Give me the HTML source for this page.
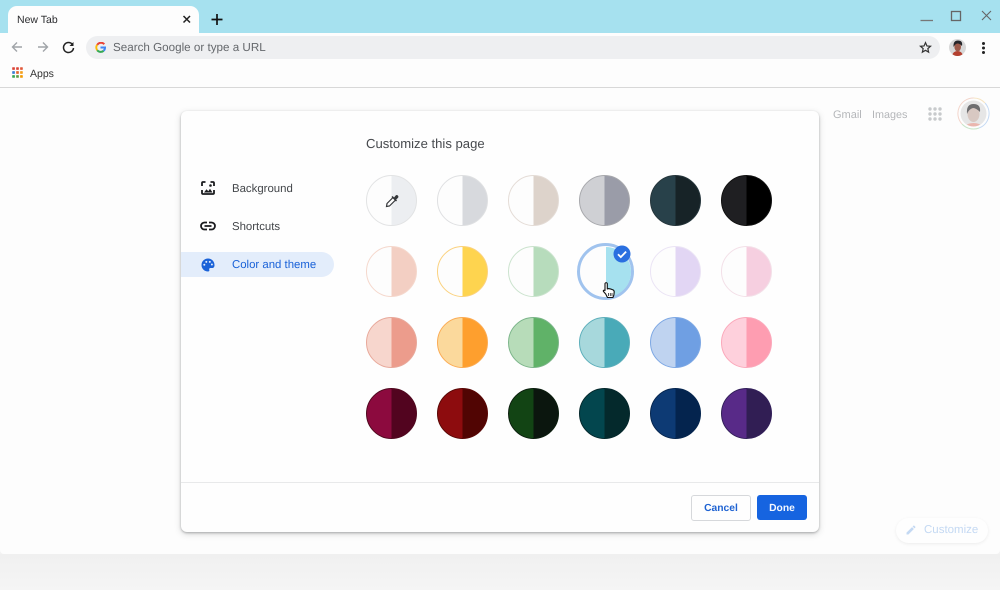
<!DOCTYPE html>
<html><head><meta charset="utf-8"><style>
html,body{margin:0;padding:0}
body{width:1000px;height:590px;overflow:hidden;position:relative;background:#f3f3f3;font-family:"Liberation Sans",sans-serif;text-rendering:geometricPrecision}
.a{position:absolute}
.t{position:absolute;white-space:nowrap;line-height:16px}
.c{position:absolute;width:51px;height:51px;border-radius:50%;box-sizing:border-box;border:1.5px solid}
</style></head><body>
<div class="a" style="left:0;top:0;width:1000px;height:34px;background:#a6e1ef"></div>
<div class="a" style="left:0;top:33px;width:1000px;height:55px;background:#fdfdfd"></div>
<div class="a" style="left:8px;top:6px;width:191px;height:28px;background:#fdfdfd;border-radius:9px 9px 0 0"></div>
<div class="t" style="left:17px;top:12px;font-size:10.5px;color:#2b2c2f">New Tab</div>
<svg class="a" style="left:0;top:0" width="1000" height="90" fill="none">
<path d="M183.500 16l6.500 6.500M190 16l-6.500 6.500" stroke="#222" stroke-width="1.500"/>
<path d="M217 14v11M211.500 19.500h11" stroke="#111" stroke-width="1.700"/>
<path d="M920.500 20.500h12.500" stroke="#777" stroke-width="1.300"/>
<rect x="951.500" y="11.500" width="9" height="9" stroke="#666" stroke-width="1.300"/>
<path d="M982 11l9 9M991 11l-9 9" stroke="#666" stroke-width="1.100"/>
<path d="M22 47H13M17 42.500L12.500 47L17 51.500" stroke="#a0a4a8" stroke-width="1.400"/>
<path d="M38 47H47M43 42.500L47.500 47L43 51.500" stroke="#a0a4a8" stroke-width="1.400"/>
<path d="M72.500 44.500A5 5 0 1 0 73.500 48" stroke="#222" stroke-width="1.500"/>
<path d="M73.500 42v4h-4z" fill="#222"/>
</svg>
<div class="a" style="left:86px;top:36px;width:854px;height:23px;border-radius:12px;background:#eeeff1"></div>
<svg class="a" style="left:95px;top:42px" width="11" height="11" viewBox="0 0 11 11" fill="none" stroke-width="2">
<path d="M9.300 2.200A4.500 4.500 0 0 0 2.200 2.800" stroke="#ea4335"/>
<path d="M2.200 2.800A4.500 4.500 0 0 0 2.200 8.200" stroke="#fbbc05"/>
<path d="M2.200 8.200A4.500 4.500 0 0 0 8.600 8.800" stroke="#34a853"/>
<path d="M8.600 8.800A4.500 4.500 0 0 0 10 5.500H5.500" stroke="#4285f4"/>
</svg>
<div class="t" style="left:113px;top:40px;font-size:11.650px;color:#65686c">Search Google or type a URL</div>
<svg class="a" style="left:919px;top:41px" width="13" height="13" viewBox="0 0 24 24" fill="none" stroke="#333" stroke-width="2.200"><path d="M12 3l2.700 6.100 6.600.6-5 4.400 1.500 6.500-5.800-3.400-5.800 3.400 1.500-6.500-5-4.400 6.600-.6z"/></svg>
<svg class="a" style="left:949px;top:39px;filter:blur(.3px)" width="17" height="17" viewBox="0 0 17 17"><clipPath id="sp"><circle cx="8.500" cy="8.500" r="8.500"/></clipPath><g clip-path="url(#sp)"><rect width="17" height="17" fill="#d8d8d8"/><path d="M3 17q1-5 5.500-5t5.500 5z" fill="#b4402f"/><ellipse cx="8.700" cy="8" rx="3.300" ry="4.500" fill="#9c5a4a"/><path d="M4.500 8q-.500-6.500 4.500-6.500T13 7q-2.500-2.500-4.500-2.500T4.500 8z" fill="#26262a"/></g></svg>
<div class="a" style="left:981.500px;top:42px;width:3px;height:3px;border-radius:50%;background:#222;box-shadow:0 4.500px 0 #222,0 9px 0 #222"></div>
<svg class="a" style="left:12px;top:67px" width="11" height="11" viewBox="0 0 11 11">
<rect x=".2" y=".2" width="2.700" height="2.700" rx=".6" fill="#db4437"/><rect x="4.150" y=".2" width="2.700" height="2.700" rx=".6" fill="#db4437"/><rect x="8.100" y=".2" width="2.700" height="2.700" rx=".6" fill="#e2593a"/>
<rect x=".2" y="4.150" width="2.700" height="2.700" rx=".6" fill="#3d7fd6"/><rect x="4.150" y="4.150" width="2.700" height="2.700" rx=".6" fill="#e0662f"/><rect x="8.100" y="4.150" width="2.700" height="2.700" rx=".6" fill="#f4a020"/>
<rect x=".2" y="8.100" width="2.700" height="2.700" rx=".6" fill="#34a853"/><rect x="4.150" y="8.100" width="2.700" height="2.700" rx=".6" fill="#5f9d45"/><rect x="8.100" y="8.100" width="2.700" height="2.700" rx=".6" fill="#f29900"/>
</svg>
<div class="t" style="left:30px;top:66px;font-size:10.500px;color:#333">Apps</div>
<div class="a" style="left:0;top:87px;width:1000px;height:1px;background:#d8d8d8"></div>

<div class="a" style="left:0;top:88px;width:1000px;height:466px;background:#fdfdfd;border-radius:0 0 4px 4px"></div>
<div class="a" style="left:0;top:554px;width:1000px;height:36px;background:linear-gradient(#f0f0f0,#f5f5f5)"></div>
<div class="t" style="left:833px;top:107px;font-size:11px;color:#b4b6b9">Gmail</div>
<div class="t" style="left:872px;top:107px;font-size:10.800px;color:#b4b6b9">Images</div>
<svg class="a" style="left:928px;top:107px" width="14" height="14" fill="#c8cacc"><circle cx="2" cy="2" r="1.700"/><circle cx="7" cy="2" r="1.700"/><circle cx="12" cy="2" r="1.700"/><circle cx="2" cy="7" r="1.700"/><circle cx="7" cy="7" r="1.700"/><circle cx="12" cy="7" r="1.700"/><circle cx="2" cy="12" r="1.700"/><circle cx="7" cy="12" r="1.700"/><circle cx="12" cy="12" r="1.700"/></svg>
<svg class="a" style="left:957px;top:97px;filter:blur(.3px)" width="33" height="33" viewBox="0 0 33 33" fill="none">
<path d="M16.500 1A15.500 15.500 0 0 0 5 27" stroke="#f3d5cb" stroke-width="1"/><path d="M5 27A15.500 15.500 0 0 0 22 31" stroke="#c8e4c8" stroke-width="1"/><path d="M22 31A15.500 15.500 0 0 0 28 6" stroke="#c4d9f3" stroke-width="1"/><path d="M28 6A15.500 15.500 0 0 0 16.500 1" stroke="#f6e4c2" stroke-width="1"/>
<clipPath id="cp"><circle cx="16.500" cy="16.500" r="13"/></clipPath>
<g clip-path="url(#cp)"><rect width="33" height="33" fill="#e6e6e6"/><path d="M6 33q2-7 10.500-7T27 33z" fill="#eab6ae"/><ellipse cx="16.500" cy="17" rx="6" ry="8" fill="#d8c8c2"/><path d="M10 17q-1-10 6.500-10T23 15q-4-4-7-4-4 1-6 6z" fill="#6e6e70"/></g>
</svg>

<div class="a" style="left:896px;top:518px;width:92px;height:25px;border-radius:13px;background:#fefefe;box-shadow:0 1px 3px rgba(0,0,0,.07)"></div>
<svg class="a" style="left:905px;top:524px" width="12" height="12" viewBox="0 0 24 24" fill="#c4d9f3"><path d="M3 17.200V21h3.800L17.800 9.900l-3.700-3.700zM20.700 7a1 1 0 0 0 0-1.400l-2.300-2.300a1 1 0 0 0-1.400 0l-1.800 1.800 3.700 3.700z"/></svg>
<div class="t" style="left:924px;top:522px;font-size:11.500px;color:#c4d9f3">Customize</div>

<div class="a" style="left:181px;top:111px;width:638px;height:421px;background:#fefefe;border-radius:6px;box-shadow:0 1px 2px rgba(60,64,67,.35),0 2px 7px rgba(60,64,67,.2)"></div>
<div class="t" style="left:366px;top:136px;font-size:13.100px;color:#46494d">Customize this page</div>

<div class="a" style="left:181px;top:252px;width:153px;height:25px;border-radius:0 13px 13px 0;background:#e3edfb"></div>
<svg class="a" style="left:201px;top:181px" width="14" height="14" viewBox="0 0 14 14" fill="none"><path d="M4.500 1H2a1 1 0 0 0-1 1v3M9.500 1H12a1 1 0 0 1 1 1v3M1 9V12a1 1 0 0 0 1 1h10a1 1 0 0 0 1-1V9" stroke="#1a1b1e" stroke-width="1.800"/><path d="M3 11.500l2.500-3.200 1.800 1.900 1.700-2.400 2.500 3.700z" fill="#1a1b1e"/><circle cx="9.500" cy="4.500" r="1.300" fill="#1a1b1e"/></svg>
<svg class="a" style="left:200px;top:220px" width="16" height="12" viewBox="0 0 16 12" fill="none" stroke="#1a1b1e" stroke-width="1.800"><path d="M7 2.500H4.500a3.500 3.500 0 0 0 0 7H7M9 2.500h2.500a3.500 3.500 0 0 1 0 7H9M4.500 6h7"/></svg>
<svg class="a" style="left:201px;top:258px" width="14" height="14" viewBox="0 0 14 14"><path d="M7 .5a6.500 6.500 0 0 0 0 13c1.200 0 1.600-.8 1.300-1.500-.4-.9 0-2 1.300-2h1.600c1.400 0 2.300-1.100 2.300-2.800C13.500 3.200 10.600.5 7 .5z" fill="#1a62d8"/><g fill="#e3edfb"><circle cx="3.300" cy="6.800" r="1"/><circle cx="5.300" cy="3.900" r="1"/><circle cx="8.800" cy="3.900" r="1"/><circle cx="10.900" cy="6.500" r="1"/></g></svg>
<div class="t" style="left:232px;top:181px;font-size:11.400px;color:#44474b">Background</div>
<div class="t" style="left:232px;top:219px;font-size:11.400px;color:#44474b">Shortcuts</div>
<div class="t" style="left:232px;top:257px;font-size:11.400px;color:#1a62d8">Color and theme</div>

<div class="c" style="left:366px;top:175px;border-color:#e2e3e4;background:linear-gradient(90deg,#fdfdfd 50%,#eceef1 50%)"></div>
<div class="c" style="left:437px;top:175px;border-color:#dfe0e2;background:linear-gradient(90deg,#fdfdfd 50%,#d7d9dd 50%)"></div>
<div class="c" style="left:508px;top:175px;border-color:#e4dcd6;background:linear-gradient(90deg,#fdfdfd 50%,#ddd3cb 50%)"></div>
<div class="c" style="left:579px;top:175px;border-color:#a8a9ad;background:linear-gradient(90deg,#cfd0d4 50%,#9a9ca8 50%)"></div>
<div class="c" style="left:650px;top:175px;border-color:#26363c;background:linear-gradient(90deg,#28414a 50%,#172327 50%)"></div>
<div class="c" style="left:721px;top:175px;border-color:#111;background:linear-gradient(90deg,#1f1f22 50%,#000 50%)"></div>

<div class="c" style="left:366px;top:246px;border-color:#f5d8cd;background:linear-gradient(90deg,#fdfdfd 50%,#f3cfc3 50%)"></div>
<div class="c" style="left:437px;top:246px;border-color:#fbd27f;background:linear-gradient(90deg,#fdfdfd 50%,#fed44f 50%)"></div>
<div class="c" style="left:508px;top:246px;border-color:#cbe3ce;background:linear-gradient(90deg,#fdfdfd 50%,#b7dcbc 50%)"></div>
<div class="c" style="left:650px;top:246px;border-color:#ebe4f5;background:linear-gradient(90deg,#fdfdfd 50%,#e2d6f4 50%)"></div>
<div class="c" style="left:721px;top:246px;border-color:#f3e0e8;background:linear-gradient(90deg,#fdfdfd 50%,#f6cfe0 50%)"></div>
<div class="a" style="left:577px;top:243px;width:57px;height:57px;box-sizing:border-box;border-radius:50%;border:3.500px solid #a0c3ee;background:#fdfdfd"></div>
<div class="c" style="left:580.500px;top:246.500px;width:50px;height:50px;border:0;background:linear-gradient(90deg,#fdfdfd 50%,#a6e1ef 50%)"></div>

<div class="c" style="left:366px;top:317px;border-color:#e8a99b;background:linear-gradient(90deg,#f7d6cd 50%,#ec9c8c 50%)"></div>
<div class="c" style="left:437px;top:317px;border-color:#fbac55;background:linear-gradient(90deg,#fbd99c 50%,#fe9f2e 50%)"></div>
<div class="c" style="left:508px;top:317px;border-color:#7cb58a;background:linear-gradient(90deg,#b7dcb9 50%,#60b268 50%)"></div>
<div class="c" style="left:579px;top:317px;border-color:#5eafbb;background:linear-gradient(90deg,#a7d8dc 50%,#49aab8 50%)"></div>
<div class="c" style="left:650px;top:317px;border-color:#7ea8e4;background:linear-gradient(90deg,#bfd3f0 50%,#6f9fe3 50%)"></div>
<div class="c" style="left:721px;top:317px;border-color:#fba9bb;background:linear-gradient(90deg,#fed0dc 50%,#fe9db1 50%)"></div>

<div class="c" style="left:366px;top:388px;border-color:#50091f;background:linear-gradient(90deg,#8c0a3e 50%,#52041f 50%)"></div>
<div class="c" style="left:437px;top:388px;border-color:#5a0806;background:linear-gradient(90deg,#8d0c0e 50%,#510503 50%)"></div>
<div class="c" style="left:508px;top:388px;border-color:#0c1f0f;background:linear-gradient(90deg,#124414 50%,#0b160e 50%)"></div>
<div class="c" style="left:579px;top:388px;border-color:#05282c;background:linear-gradient(90deg,#03464e 50%,#04292c 50%)"></div>
<div class="c" style="left:650px;top:388px;border-color:#06264f;background:linear-gradient(90deg,#0d3a74 50%,#04244e 50%)"></div>
<div class="c" style="left:721px;top:388px;border-color:#33205a;background:linear-gradient(90deg,#582a88 50%,#311e54 50%)"></div>

<svg class="a" style="left:385px;top:194px" width="14" height="14" viewBox="0 0 14 14" fill="none" stroke="#35373a" stroke-width="1.200"><path d="M8 3.500L2 9.500 1.500 12.500 4.500 12 10.500 6z" fill="#fdfdfd"/><path d="M7 2.500l4.500 4.500" stroke-width="1.500"/><path d="M9 4.500l2-2.500a1 1 0 0 1 1.500 1.500L10 6" fill="#35373a"/></svg>
<svg class="a" style="left:613px;top:245px" width="18" height="18" viewBox="0 0 18 18"><circle cx="9" cy="9" r="8.500" fill="#2a6fe0"/><path d="M5 9.300l2.800 2.800 5.300-5.500" fill="none" stroke="#fff" stroke-width="1.800"/></svg>
<svg class="a" style="left:602px;top:282px" width="15" height="17" viewBox="0 0 15 17"><path d="M3 1.500a1.200 1.200 0 0 1 2.300 0V7l1-.4 1.500.2 1.500.4 1.700.7c.9.4 1.200 1 1.200 2l-.3 3-1 2.600H5.500L3.700 12 1.500 9.500c-.6-1 .4-1.800 1.500-1z" fill="#fff" stroke="#111" stroke-width="1.100" stroke-linejoin="round"/><path d="M6.500 11v3M8.300 11v3M10 11v3" stroke="#222" stroke-width=".8"/></svg>

<div class="a" style="left:181px;top:482px;width:638px;height:1px;background:#e8e9ea"></div>
<div class="a" style="left:691px;top:495px;width:60px;height:26px;box-sizing:border-box;border:1px solid #d6d8db;border-radius:3px;background:#fefefe"></div>
<div class="t" style="left:691px;top:501px;width:60px;text-align:center;font-size:10.300px;font-weight:bold;color:#1f63d2">Cancel</div>
<div class="a" style="left:757px;top:495px;width:50px;height:25px;border-radius:3px;background:#1664e0"></div>
<div class="t" style="left:757px;top:500.500px;width:50px;text-align:center;font-size:10.300px;font-weight:bold;color:#f4f8ff">Done</div>
</body></html>
